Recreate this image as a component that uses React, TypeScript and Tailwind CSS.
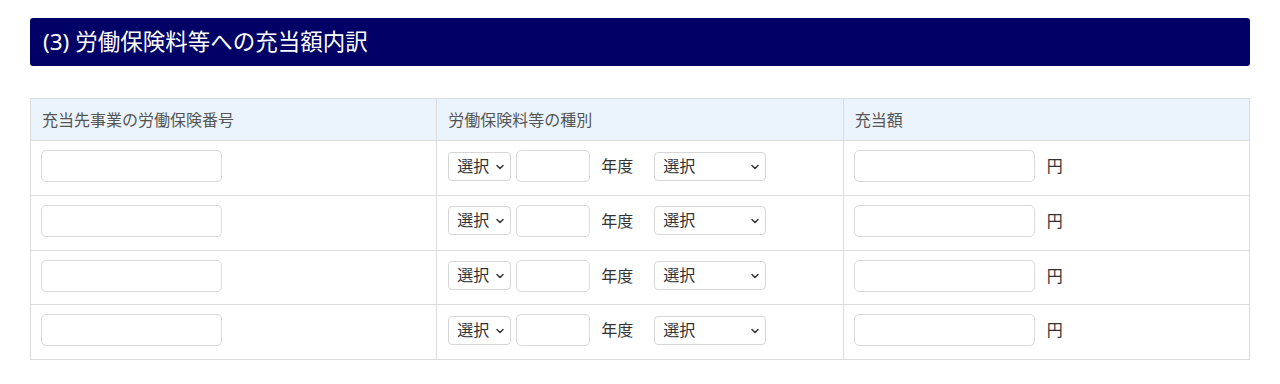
import { ChevronDown } from "lucide-react";

const rows = [0, 1, 2, 3];

function Select({ width }: { width: string }) {
  return (
    <div className={`relative ${width} h-[29px]`}>
      <select className="appearance-none w-full h-full rounded-[4px] border border-[#d6d6d6] bg-white pl-[8px] text-[16px] leading-[27px] text-[#333] outline-none">
        <option>選択</option>
      </select>
      <ChevronDown
        className="pointer-events-none absolute right-[5px] top-[9px] w-[12px] h-[12px] text-[#333]"
        strokeWidth={3}
      />
    </div>
  );
}

export default function App() {
  return (
    <div
      className="bg-white w-[1280px] h-[384px] px-[30px] pt-[18px]"
      style={{ fontFamily: '"Noto Sans", "Noto Sans CJK JP", sans-serif' }}
    >
      <div className="h-[48px] rounded-[3px] bg-[#000066] flex items-center pl-[13px] text-white text-[22.5px] leading-none">
        (3) 労働保険料等への充当額内訳
      </div>

      <table className="mt-[32px] w-full border-collapse table-fixed">
        <thead>
          <tr className="h-[42px] bg-[#ebf4fc] text-[16px] leading-[20px] text-[#555] text-left">
            <th className="font-normal border border-[#dcdcdc] pl-[11px]">充当先事業の労働保険番号</th>
            <th className="font-normal border border-[#dcdcdc] pl-[11px]">労働保険料等の種別</th>
            <th className="font-normal border border-[#dcdcdc] pl-[11px]">充当額</th>
          </tr>
        </thead>
        <tbody className="text-[16px] leading-[20px]">
          {rows.map((r) => (
            <tr key={r} className="h-[54.75px]">
              <td className="border border-[#dcdcdc] pl-[10px] align-top pt-[9px]">
                <input className="block w-[181px] h-[32px] rounded-[5px] border border-[#d9d9d9] outline-none" />
              </td>
              <td className="border border-[#dcdcdc] pl-[11px] align-top pt-[9px]">
                <div className="flex items-center">
                  <Select width="w-[63px]" />
                  <input className="ml-[5px] w-[74px] h-[32px] rounded-[5px] border border-[#d9d9d9] outline-none" />
                  <span className="ml-[11px] text-[#333]">年度</span>
                  <div className="ml-[21px]">
                    <Select width="w-[112px]" />
                  </div>
                </div>
              </td>
              <td className="border border-[#dcdcdc] pl-[10px] align-top pt-[9px]">
                <div className="flex items-center">
                  <input className="w-[181px] h-[32px] rounded-[5px] border border-[#d9d9d9] outline-none" />
                  <span className="ml-[12px] text-[#333]">円</span>
                </div>
              </td>
            </tr>
          ))}
        </tbody>
      </table>
    </div>
  );
}
